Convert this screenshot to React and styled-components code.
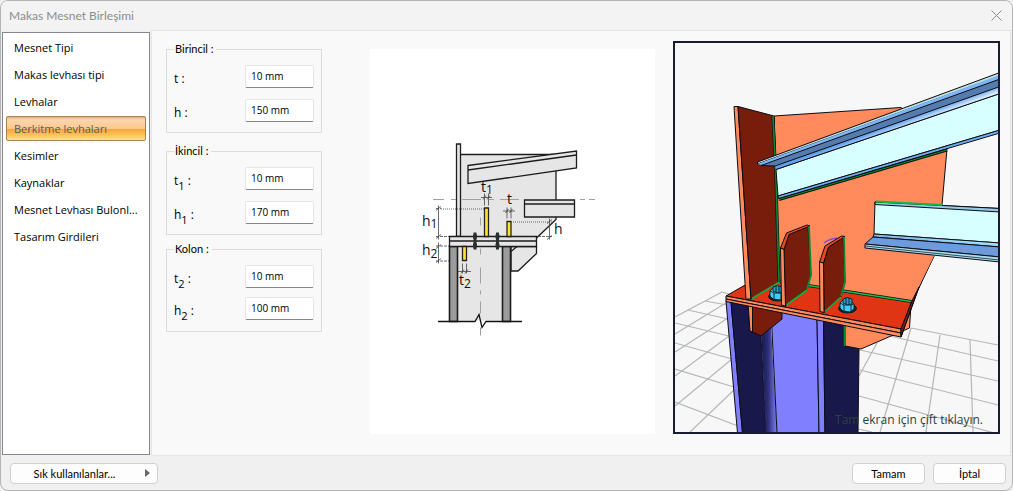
import React from 'react'
import styled, { createGlobalStyle } from 'styled-components'

const GlobalStyle = createGlobalStyle`
  body {
    margin: 0;
    background: #f0f0f0;
  }
  * {
    box-sizing: border-box;
  }
`

const sidebarItems = [
  'Mesnet Tipi',
  'Makas levhası tipi',
  'Levhalar',
  'Berkitme levhaları',
  'Kesimler',
  'Kaynaklar',
  'Mesnet Levhası Bulonl...',
  'Tasarım Girdileri'
]

const groups = [
  {
    title: 'Birincil :',
    space: 10,
    fields: [
      { id: 't', name: 't', value: '10 mm' },
      { id: 'h', name: 'h', value: '150 mm' }
    ]
  },
  {
    title: 'İkincil :',
    space: 6,
    fields: [
      { id: 't1', name: 't', sub: '1', value: '10 mm' },
      { id: 'h1', name: 'h', sub: '1', value: '170 mm' }
    ]
  },
  {
    title: 'Kolon :',
    space: 0,
    compact: true,
    fields: [
      { id: 't2', name: 't', sub: '2', value: '10 mm' },
      { id: 'h2', name: 'h', sub: '2', value: '100 mm' }
    ]
  }
]

const Window = styled.div`
  display: flex;
  flex-direction: column;
  min-height: 100vh;
  border: 1px solid #b4b4b4;
  border-radius: 8px;
  overflow: hidden;
  background: #f0f0f0;
  color: #000;
  font-family: Lato, 'Open Sans', sans-serif;
  font-size: 11px;
`

const TitleBar = styled.header`
  display: flex;
  align-items: center;
  justify-content: space-between;
  height: 29px;
  padding: 0 10px 0 8px;
  background: #f3f3f3;
`

const Title = styled.h1`
  margin: 0;
  font-size: 12px;
  font-weight: 400;
  color: #8c8c8c;
`

const CloseButton = styled.button`
  display: flex;
  padding: 0;
  border: 0;
  background: none;
`

const Body = styled.div`
  display: flex;
  flex: 1;
  padding: 0 1px;
`

const Sidebar = styled.nav`
  display: flex;
  flex-direction: column;
  gap: 2px;
  flex: 0 0 148px;
  min-width: 0;
  margin: 2px 0 1px;
  padding: 2px 3px;
  border: 1px solid #828790;
  background: #fff;
`

const SidebarButton = styled.button`
  display: block;
  height: 25px;
  padding: 0 7px;
  border: 1px solid ${p => (p.$active ? '#a9824f' : 'transparent')};
  border-radius: 2px;
  background: ${p => (p.$active
    ? 'linear-gradient(#dfb282, #fcd6ad 12%, #fcc88c 50%, #f9a63a 54%, #fcc35a 78%, #fee28e)'
    : 'none')};
  color: ${p => (p.$active ? '#5a5a5a' : '#000')};
  font-family: 'Open Sans', 'Noto Sans', sans-serif;
  font-size: 11px;
  font-weight: 500;
  text-align: left;
  white-space: nowrap;
`

const Page = styled.main`
  display: flex;
  flex: 1;
  margin-left: 1px;
  padding: 10px 10px 21px 14px;
  border: 1px solid #e5e5e5;
  background: #f9f9f9;
`

const Form = styled.form`
  flex: 0 0 156px;
  margin-right: 48px;
`

const Group = styled.fieldset`
  height: ${p => (p.$compact ? '91px' : '92px')};
  margin: 0 0 ${p => p.$space}px;
  padding: 8px 7px 0;
  border: 1px solid #dcdcdc;
`

const Legend = styled.legend`
  padding: 0 3px 0 1px;
  line-height: 16px;
`

const Field = styled.div`
  display: flex;
  align-items: center;
  justify-content: space-between;
  height: 23px;
  margin-bottom: ${p => (p.$compact ? '9px' : '11px')};
`

const Label = styled.label`
  padding-top: 4px;
  font-family: 'Open Sans', 'Noto Sans', sans-serif;
  font-size: 12px;
  line-height: 16px;

  sub {
    font-size: 11px;
    line-height: 0;
    vertical-align: -5px;
  }
`

const Input = styled.input`
  width: 69px;
  height: 23px;
  padding: 0 5px 2px;
  border: 1px solid #e5e5e5;
  border-bottom-color: #868686;
  border-radius: 2px;
  background: #fff;
  color: #000;
  font-family: 'Open Sans', 'Noto Sans', sans-serif;
  font-size: 10px;
`

const DiagramPanel = styled.section`
  flex: 285 1 0;
  min-width: 0;
  margin: 8px 18px 0 0;
  background: #fff;
`

const ModelView = styled.section`
  position: relative;
  flex: 323 1 0;
  min-width: 0;
  border: 2px solid #1a1a30;
  background: #f7f7f7;
`

const Drawing = styled.svg`
  display: block;
  width: 100%;
  height: 100%;
  font-family: 'Open Sans', 'Noto Sans', sans-serif;
`

const ViewHint = styled.span`
  position: absolute;
  right: 15px;
  bottom: 4px;
  color: #2c4240;
  font-family: 'Open Sans', 'Noto Sans', sans-serif;
  font-size: 12px;
  line-height: 16px;
`

const Footer = styled.footer`
  display: flex;
  align-items: center;
  gap: 8px;
  height: 34px;
  padding: 0 6px 0 9px;
`

const Button = styled.button`
  display: flex;
  align-items: center;
  justify-content: center;
  width: ${p => (p.$wide ? '148px' : '73px')};
  height: 21px;
  margin-right: ${p => (p.$wide ? 'auto' : '0')};
  padding: 0 7px;
  border: 1px solid #d0d0d0;
  border-radius: 4px;
  background: #fdfdfd;
  color: #000;
  font-family: inherit;
  font-size: 11px;

  span {
    flex: 1;
    padding-right: 14px;
  }
`

const Diagram = () => (
  <Drawing viewBox="370 50 285 384" role="img" aria-label="Berkitme levhaları">
    <g fill="#e6e6e6" stroke="#1c1c1c" strokeWidth="1.3">
      <path d="M460 155H556V220L537 238H460Z" />
      <path d="M456.500 144.500H460.500V237H456.500Z" />
      <path d="M468 166 576.500 151.500V168.500L468 184Z" />
      <path d="M468 170.500 576.500 155.500" />
      <path d="M524.500 200.500H574.500V217.500H524.500Z" />
      <path d="M524.500 204.500H574.500" />
      <path d="M511 247H536.500V254L518 271.500H511Z" />
      <path d="M511 252 517 247" />
      <path d="M450 247H510V321H450Z" stroke="none" />
      <path d="M449.500 247H457.500V322H449.500ZM502.500 247H510.500V322H502.500Z" fill="#9c9c9c" strokeWidth="1.600" />
      <path d="M449.500 237H536.500V247H449.500ZM449.500 241.500H536.500" />
    </g>
    <path d="M433 200H444M451 200H456M462 200H481M489 200H494M500 200H519M580 200H585M589 200H595" stroke="#a0a0a0" fill="none" />
    <path d="M480.500 218V226M480.500 249V255M480.500 268V284M480.500 291V295M480.500 302V314M480.500 328V336" stroke="#a0a0a0" fill="none" />
    <path d="M438 322H475L479 315L482 328L486 322H522" stroke="#111" strokeWidth="1.300" fill="none" />
    <g fill="#fbe32f" stroke="#222" strokeWidth="1.300">
      <path d="M484.500 208.500H488.500V237H484.500ZM507 222H511V237H507ZM462.500 247H466.500V261H462.500Z" />
    </g>
    <path d="M475 233V250M497.500 233V250" stroke="#2a2e2c" strokeWidth="3" />
    <path d="M475 235V239M475 244V248M497.500 235V239M497.500 244V248" stroke="#2a2e2c" strokeWidth="4" />
    <g stroke="#444" strokeWidth=".8" fill="none">
      <path d="M438.500 206V240M438.500 243V264M549.500 219V240" />
      <path d="M436 211 441 207M436 239 441 235M436 249 441 245M436 263 441 259M547 224 552 220M547 240 552 236" />
      <path d="M436 209H441M436 237H449M436 246.500H449M436 261.500H449M538 237H552" strokeDasharray="3 1" />
      <path d="M441 209.500H484M511 222.500H552" strokeDasharray="1 1" />
      <path d="M484.500 194V206M488.500 194V206M481 198H492M483 200 486 196M487 200 490 196" />
      <path d="M507 208V219M511 208V219M503 211.500H515M505.500 213.500 508.500 209.500M509.500 213.500 512.500 209.500" />
      <path d="M462.500 264V274M466.500 264V274M458 272H471M461 274 464 270M465 274 468 270" />
    </g>
    <g fill="#111" fontSize="14">
      <text x="481" y="192">t<tspan dy="2" fontSize="12">1</tspan></text>
      <text x="507" y="204">t</text>
      <text x="422" y="226">h<tspan dy="2" fontSize="12">1</tspan></text>
      <text x="422" y="255">h<tspan dy="3" fontSize="12">2</tspan></text>
      <text x="554" y="234">h</text>
      <text x="459" y="285">t<tspan dy="3" fontSize="12">2</tspan></text>
    </g>
  </Drawing>
)

const Bolt = ({ x, y }) => (
  <g transform={`translate(${x} ${y})`} stroke="#071c26" strokeWidth=".9" strokeLinejoin="round">
    <ellipse cx="0.500" cy="3.500" rx="9" ry="4.500" fill="#0b2630" />
    <path d="M-7 -2-4 -5 4 -4 7 -1V4L3 7-4 6-7 3Z" fill="#41cdf5" />
    <path d="M-7 -2-3 0 4 0 7 -1M-3 0V6M4 0V6" fill="none" />
    <path d="M-4 -2V-6Q0 -9 5 -6V-1Q0 1-4 -2Z" fill="#2b9fc4" />
    <path d="M-1 -7V-1M2 -7V-1" fill="none" />
  </g>
)

const Model = () => (
  <Drawing viewBox="675 43 323 389" preserveAspectRatio="xMidYMid slice" aria-hidden="true">
    <defs>
      <linearGradient id="columnRound" x1="0" x2="1">
        <stop offset="0" stopColor="#18184a" />
        <stop offset=".45" stopColor="#2e2e78" />
        <stop offset="1" stopColor="#8080ff" />
      </linearGradient>
      <linearGradient id="beamRound" gradientUnits="userSpaceOnUse" x1="886" y1="127" x2="889" y2="135">
        <stop offset="0" stopColor="#5f9fee" />
        <stop offset="1" stopColor="#f4feff" />
      </linearGradient>
      <linearGradient id="chordRound" gradientUnits="userSpaceOnUse" x1="935" y1="238" x2="934.500" y2="243">
        <stop offset="0" stopColor="#a5e6fa" />
        <stop offset="1" stopColor="#6fa5e6" />
      </linearGradient>
    </defs>

    <g stroke="#b4b8b4" strokeWidth="1.200" fill="none">
      <path d="M722 292 675 317M726 303 675 334M728 318 675 352M729 336 675 376M732 359 675 406M734 390 690 432" />
      <path d="M722 292 729 294M705 301 727 305M688 310 728 319M675 323 729 336M675 343 732 359M675 369 734 387M675 402 738 426" />
      <path d="M911 328 998 345M890 336 998 361M860 350 998 381M860 370 998 405M859 396 998 434M858 429 872 432" />
      <path d="M911 328 880 432M940 335 926 432M970 340 973 432M877 343 859 376" />
    </g>

    <g stroke="#0c0c14" strokeWidth="1" strokeLinejoin="round">
      <path d="M726 301 731 302 742.500 433H737.500Z" fill="#8080ff" />
      <path d="M731 302 761 308V336L766 433H742.500Z" fill="#18184a" />
      <path d="M761 330 771 326 777 433H766Z" fill="url(#columnRound)" stroke="none" />
      <path d="M771 310 817 318 819 433H777Z" fill="#8080ff" />
      <path d="M817 318 823.500 319 825 433H819Z" fill="#8080ff" />
      <path d="M823.500 319 859 325V349L858 433H825Z" fill="#18184a" />
      <path d="M845 324 911 305 909.500 328 861 349 845 346Z" fill="#ff8a5c" />
      <path d="M844.500 325V346" stroke="#0b8a2d" strokeWidth="1.500" />
      <path d="M748 303 750 331 761 336 782 319V305Z" fill="#781c0c" />
      <path d="M748 303 750 331 752.500 332V303Z" fill="#ff8a5c" />

      <path d="M774 116 901 107.500 947 149 942 205 918 287 911.500 302 842 291 779 281Z" fill="#ff8a5c" />
      <path d="M934 256 911.500 302 901 337 918 290Z" fill="#781c0c" />
      <path d="M874 201 934 256 911.500 302 842 291V201Z" fill="#ff8a5c" stroke="none" />

      <path d="M726 296 746 284.500 779 281 842 291 911.500 302 901 329Z" fill="#e03514" />
      <path d="M726 296 901 329V333L726 299Z" fill="#ff8a5c" />
      <path d="M726 299 901 333V337L726 301.500Z" fill="#ff8a5c" />
      <path d="M901 329 911.500 302 919 287 912 306 901 337Z" fill="#781c0c" />
      <path d="M779 281 911.500 301.500" stroke="#111" strokeWidth="3" />
      <path d="M779 281 911 301.500" stroke="#12c048" strokeWidth="1.600" />

      <path d="M734 106.500 738 106.500 751 299H746Z" fill="#ff8a5c" />
      <path d="M738 106.500 774 116 779.500 281.500 751 299Z" fill="#781c0c" />
      <path d="M773 116 776 180 779 281" stroke="#111" strokeWidth="3" fill="none" />
      <path d="M773 116 776 180 779 281" stroke="#0b8a2d" strokeWidth="1.600" fill="none" />
      <path d="M752 298.500 779.500 282" stroke="#12b042" strokeWidth="1.600" />
    </g>

    <Bolt x={777} y={293} />

    <g stroke="#0c0c14" strokeWidth="1" strokeLinejoin="round">
      <path d="M784 249 789 234 808 226.500 811 275 807 289 785.500 306Z" fill="#781c0c" />
      <path d="M780.500 248 786.500 233 807 225 810 226 789 234.500 784 249.500Z" fill="#e84a24" />
      <path d="M780.500 248 784 249.500 785.500 306 781.500 305Z" fill="#ff8a5c" />
      <path d="M809 226 811 275 807 289" stroke="#0b8a2d" strokeWidth="1.800" fill="none" />
      <path d="M786.500 305 807 290" stroke="#12b042" strokeWidth="1.600" />

      <path d="M824 243Q829 239 837 238" fill="none" stroke="#8a4ad8" strokeWidth="1.500" />
      <path d="M823.500 263 828.500 247 843 236.500 845 282 841 297 824 312.500Z" fill="#781c0c" />
      <path d="M819.500 262 825 246 841.500 236 845 236.500 828.500 247 823.500 263Z" fill="#e84a24" />
      <path d="M819.500 262 823.500 263 824 312.500 820 311.500Z" fill="#ff8a5c" />
      <path d="M844 237 845 282 841 296" stroke="#0b8a2d" strokeWidth="1.800" fill="none" />
      <path d="M825 311.500 841 297" stroke="#12b042" strokeWidth="1.600" />
    </g>

    <Bolt x={847} y={305} />

    <g stroke="#0c0c14" strokeWidth="1" strokeLinejoin="round">
      <path d="M779 199.500 947 150" stroke="#111" strokeWidth="3" />
      <path d="M779 199.500 947 150" stroke="#0b8a2d" strokeWidth="1.200" />
      <path d="M776 169.500 1000 93.500V130L778 196Z" fill="#d8ffff" />
      <path d="M778 196 1000 130V133L778.500 198.500Z" fill="#6fb0f5" />
      <path d="M775 165.500 1000 86.500V93.500L776 169.500Z" fill="url(#beamRound)" stroke="none" />
      <path d="M776 169.500 1000 93.500" />
      <path d="M757.500 162 1000 72.500V76L757.500 164Z" fill="#bfe0dc" />
      <path d="M757.500 164 1000 75V80L764 165.500Z" fill="#7ab6f8" stroke="none" />
      <path d="M761 165.500 1000 79V86.500L775 166Z" fill="#567cae" />

      <path d="M875 202 1000 208.500V243L874 234Z" fill="#d8ffff" />
      <path d="M875 202 1000 208.500V212L875 204.500Z" fill="#93cbe8" />
      <path d="M876 201.500 942 205" stroke="#10b545" strokeWidth="2" />
      <path d="M874 234 1000 243V247L873 237Z" fill="url(#chordRound)" />
      <path d="M873 237 1000 247V257L865 244Z" fill="#6d9bdc" />
      <path d="M865 244 1000 257V262L865 248Z" fill="#a8dff0" />
      <path d="M865 246 1000 260" strokeWidth=".7" />
    </g>
  </Drawing>
)

const App = () => {
  return (
    <>
      <GlobalStyle />
      <Window>
        <TitleBar>
          <Title>Makas Mesnet Birleşimi</Title>
          <CloseButton type="button" aria-label="Kapat">
            <svg width="11" height="11" viewBox="0 0 11 11" stroke="#8a8a8a" fill="none">
              <path d="M.5 .5 10.500 10.500M10.500 .5 .5 10.500" />
            </svg>
          </CloseButton>
        </TitleBar>
        <Body>
          <Sidebar>
            {sidebarItems.map(item => (
              <SidebarButton key={item} type="button" $active={item === 'Berkitme levhaları'}>
                {item}
              </SidebarButton>
            ))}
          </Sidebar>
          <Page>
            <Form>
              {groups.map(group => (
                <Group key={group.title} $compact={group.compact} $space={group.space}>
                  <Legend>{group.title}</Legend>
                  {group.fields.map(field => (
                    <Field key={field.id} $compact={group.compact}>
                      <Label htmlFor={field.id}>
                        {field.name}{field.sub && <sub>{field.sub}</sub>} :
                      </Label>
                      <Input id={field.id} type="text" defaultValue={field.value} />
                    </Field>
                  ))}
                </Group>
              ))}
            </Form>
            <DiagramPanel>
              <Diagram />
            </DiagramPanel>
            <ModelView>
              <Model />
              <ViewHint>Tam ekran için çift tıklayın.</ViewHint>
            </ModelView>
          </Page>
        </Body>
        <Footer>
          <Button type="button" $wide>
            <span>Sık kullanılanlar...</span>
            <svg width="5" height="8" viewBox="0 0 5 8" fill="#666">
              <path d="M0 0 5 4 0 8Z" />
            </svg>
          </Button>
          <Button type="button">Tamam</Button>
          <Button type="button">İptal</Button>
        </Footer>
      </Window>
    </>
  )
}

export default App
